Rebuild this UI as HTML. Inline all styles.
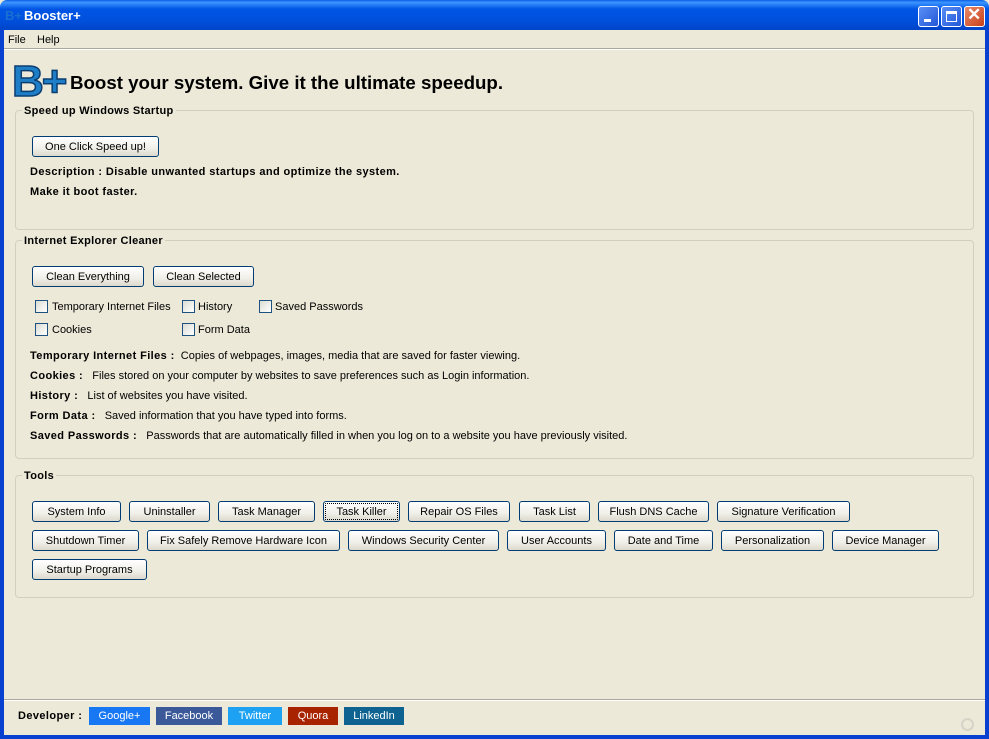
<!DOCTYPE html>
<html><head><meta charset="utf-8"><style>
*{margin:0;padding:0;box-sizing:border-box}
body{width:989px;height:739px;overflow:hidden;background:#ece9d8;font-family:"Liberation Sans",sans-serif;font-size:11px;color:#000;position:relative}
.a{position:absolute;white-space:nowrap}
.title{left:0;top:0;width:989px;height:30px;background:linear-gradient(#0a5fe4 0%,#3d95ff 8%,#0055e5 30%,#0050dc 70%,#0044c8 100%);border-radius:7px 7px 0 0}
.lb{left:0;top:30px;width:4px;height:709px;background:#0841d0}
.rb{right:0;top:30px;width:4px;height:709px;background:#0841d0}
.bb{left:0;bottom:0;width:989px;height:4px;background:#0841d0}
.wb{top:6px;width:21px;height:21px;border:1px solid #fff;border-radius:3px;background:linear-gradient(135deg,#5a8ef5,#2258d8)}
.btn{position:absolute;height:21px;border:1px solid #003c74;border-radius:3px;background:linear-gradient(#fff,#f0efe8 60%,#dcd9cc);text-align:center;line-height:21px;font-size:11px}
.grp{position:absolute;border:1px solid #d0d0bf;border-radius:4px}
.gl{position:absolute;background:#ece9d8;font-weight:bold;font-size:11px;padding:0 2px;letter-spacing:0.3px}
.cb{position:absolute;width:13px;height:13px;border:1px solid #1c5180;background:linear-gradient(135deg,#dcdcd4,#fff)}
.lnk{position:absolute;top:707px;height:18px;color:#fff;text-align:center;line-height:18px;font-size:11px}
b{font-weight:bold;letter-spacing:0.4px}
.t{margin-top:1px}
</style></head><body>
<div class="a title"></div>
<div class="a" style="left:5px;top:8px;font-weight:bold;font-size:13px;color:#1a6fd0">B+</div>
<div class="a" style="left:24px;top:8px;font-weight:bold;font-size:13px;color:#fff">Booster+</div>
<div class="a wb" style="left:918px"><div class="a" style="left:5px;top:12px;width:7px;height:3px;background:#fff"></div></div>
<div class="a wb" style="left:941px"><div class="a" style="left:4px;top:4px;width:11px;height:11px;border:1px solid #fff;border-top-width:3px"></div></div>
<div class="a wb" style="left:964px;background:linear-gradient(135deg,#e88a6a,#c8401a)"><div class="a" style="left:2px;top:-2px;color:#fff;font-size:17px;font-weight:bold">✕</div></div>
<div class="a lb"></div><div class="a rb"></div><div class="a bb"></div>
<div class="a" style="left:8px;top:34px">File</div>
<div class="a" style="left:37px;top:34px">Help</div>
<div class="a" style="left:4px;top:48px;width:981px;height:2px;border-top:1px solid #aca899;border-bottom:1px solid #fff"></div>
<div class="a" style="left:12px;top:57px;font-size:44px;font-weight:bold;color:#1e7fc8;-webkit-text-stroke:1.5px #0c3f70;line-height:50px;letter-spacing:-2px">B+</div>
<div class="a" style="left:70px;top:72px;font-size:18.7px;font-weight:bold">Boost your system. Give it the ultimate speedup.</div>

<div class="grp" style="left:15px;top:110px;width:959px;height:120px"></div>
<div class="gl" style="left:22px;top:105px">Speed up Windows Startup</div>
<div class="btn" style="left:32px;top:136px;width:127px">One Click Speed up!</div>
<div class="a" style="left:30px;top:166px"><b>Description : Disable unwanted startups and optimize the system.</b></div>
<div class="a" style="left:30px;top:186px"><b>Make it boot faster.</b></div>

<div class="grp" style="left:15px;top:240px;width:959px;height:219px"></div>
<div class="gl" style="left:22px;top:235px">Internet Explorer Cleaner</div>
<div class="btn" style="left:32px;top:266px;width:112px">Clean Everything</div>
<div class="btn" style="left:153px;top:266px;width:101px">Clean Selected</div>
<div class="cb" style="left:35px;top:300px"></div><div class="a" style="left:52px;top:301px">Temporary Internet Files</div>
<div class="cb" style="left:182px;top:300px"></div><div class="a" style="left:198px;top:301px">History</div>
<div class="cb" style="left:259px;top:300px"></div><div class="a" style="left:275px;top:301px">Saved Passwords</div>
<div class="cb" style="left:35px;top:323px"></div><div class="a" style="left:52px;top:324px">Cookies</div>
<div class="cb" style="left:182px;top:323px"></div><div class="a" style="left:198px;top:324px">Form Data</div>
<div class="a" style="left:30px;top:350px"><b>Temporary Internet Files :</b>&nbsp; Copies of webpages, images, media that are saved for faster viewing.</div>
<div class="a" style="left:30px;top:370px"><b>Cookies :</b>&nbsp;&nbsp; Files stored on your computer by websites to save preferences such as Login information.</div>
<div class="a" style="left:30px;top:390px"><b>History :</b>&nbsp;&nbsp; List of websites you have visited.</div>
<div class="a" style="left:30px;top:410px"><b>Form Data :</b>&nbsp;&nbsp; Saved information that you have typed into forms.</div>
<div class="a" style="left:30px;top:430px"><b>Saved Passwords :</b>&nbsp;&nbsp; Passwords that are automatically filled in when you log on to a website you have previously visited.</div>

<div class="grp" style="left:15px;top:475px;width:959px;height:123px"></div>
<div class="gl" style="left:22px;top:470px">Tools</div>
<div class="btn" style="left:32px;top:501px;width:89px">System Info</div>
<div class="btn" style="left:129px;top:501px;width:81px">Uninstaller</div>
<div class="btn" style="left:218px;top:501px;width:97px">Task Manager</div>
<div class="btn" style="left:323px;top:501px;width:77px;outline:1px dotted #000;outline-offset:-3px">Task Killer</div>
<div class="btn" style="left:408px;top:501px;width:102px">Repair OS Files</div>
<div class="btn" style="left:519px;top:501px;width:71px">Task List</div>
<div class="btn" style="left:598px;top:501px;width:111px">Flush DNS Cache</div>
<div class="btn" style="left:717px;top:501px;width:133px">Signature Verification</div>
<div class="btn" style="left:32px;top:530px;width:107px">Shutdown Timer</div>
<div class="btn" style="left:147px;top:530px;width:193px">Fix Safely Remove Hardware Icon</div>
<div class="btn" style="left:348px;top:530px;width:151px">Windows Security Center</div>
<div class="btn" style="left:507px;top:530px;width:99px">User Accounts</div>
<div class="btn" style="left:614px;top:530px;width:99px">Date and Time</div>
<div class="btn" style="left:721px;top:530px;width:103px">Personalization</div>
<div class="btn" style="left:832px;top:530px;width:107px">Device Manager</div>
<div class="btn" style="left:32px;top:559px;width:115px">Startup Programs</div>

<div class="a" style="left:4px;top:699px;width:981px;height:2px;border-top:1px solid #aca899;border-bottom:1px solid #fff"></div>
<div class="a" style="left:18px;top:710px"><b>Developer :</b></div>
<div class="lnk" style="left:89px;width:61px;background:#1877f2">Google+</div>
<div class="lnk" style="left:156px;width:66px;background:#3b5998">Facebook</div>
<div class="lnk" style="left:228px;width:54px;background:#1da1f2">Twitter</div>
<div class="lnk" style="left:288px;width:50px;background:#a82400">Quora</div>
<div class="lnk" style="left:344px;width:60px;background:#0e6391">LinkedIn</div>
<div class="a" style="left:961px;top:718px;width:13px;height:13px;border:2px solid #d6d3c8;border-radius:50%"></div>
</body></html>
